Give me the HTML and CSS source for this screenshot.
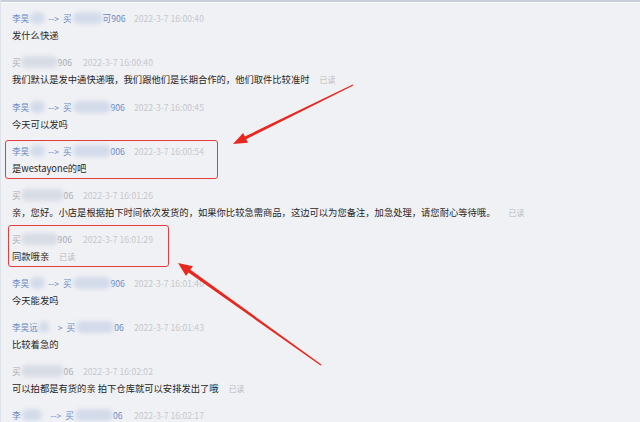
FILE: index.html
```html
<!DOCTYPE html>
<html lang="zh-CN">
<head>
<meta charset="utf-8">
<title>聊天记录</title>
<link rel="stylesheet" href="styles.css">
</head>
<body>
<div class="page">
  <div class="topbar"></div>
  <div class="list">
    <div class="msg">
      <div class="head buyer"><span>李昊</span><span class="blob bs"></span><span class="to">--&gt;</span><span class="seller-n">买</span><span class="blob bm"></span><span>可906</span><span class="time">2022-3-7 16:00:40</span></div>
      <div class="text">发什么快递</div>
    </div>
    <div class="msg">
      <div class="head seller"><span>买</span><span class="blob sb1"></span><span>906</span><span class="time">2022-3-7 16:00:40</span></div>
      <div class="text">我们默认是发中通快递哦，我们跟他们是长期合作的，他们取件比较准时<span class="read">已读</span></div>
    </div>
    <div class="msg">
      <div class="head buyer"><span>李昊</span><span class="blob bs"></span><span class="to">--&gt;</span><span class="seller-n">买</span><span class="blob bl"></span><span>906</span><span class="time">2022-3-7 16:00:45</span></div>
      <div class="text">今天可以发吗</div>
    </div>
    <div class="msg">
      <div class="head buyer"><span>李昊</span><span class="blob bs"></span><span class="to">--&gt;</span><span class="seller-n">买</span><span class="blob bl"></span><span>006</span><span class="time">2022-3-7 16:00:54</span></div>
      <div class="text">是westayone的吧</div>
    </div>
    <div class="msg">
      <div class="head seller"><span>买</span><span class="blob sb2"></span><span>06</span><span class="time">2022-3-7 16:01:26</span></div>
      <div class="text">亲，您好。小店是根据拍下时间依次发货的，如果你比较急需商品，这边可以为您备注，加急处理，请您耐心等待哦。<span class="read wide">已读</span></div>
    </div>
    <div class="msg">
      <div class="head seller"><span>买</span><span class="blob sb1"></span><span>906</span><span class="time">2022-3-7 16:01:29</span></div>
      <div class="text">同款哦亲<span class="read">已读</span></div>
    </div>
    <div class="msg">
      <div class="head buyer"><span>李昊</span><span class="blob bs"></span><span class="to">--&gt;</span><span class="seller-n">买</span><span class="blob bl"></span><span>906</span><span class="time">2022-3-7 16:01:40</span></div>
      <div class="text">今天能发吗</div>
    </div>
    <div class="msg">
      <div class="head buyer"><span>李昊远</span><span class="blob bt"></span><span class="to">&gt;</span><span class="seller-n">买</span><span class="blob bl"></span><span>06</span><span class="time">2022-3-7 16:01:43</span></div>
      <div class="text">比较着急的</div>
    </div>
    <div class="msg">
      <div class="head seller"><span>买</span><span class="blob sb2"></span><span>06</span><span class="time">2022-3-7 16:02:02</span></div>
      <div class="text">可以拍都是有货的亲 拍下仓库就可以安排发出了哦<span class="read">已读</span></div>
    </div>
    <div class="msg">
      <div class="head buyer"><span>李</span><span class="blob bw"></span><span class="to">--&gt;</span><span class="seller-n">买</span><span class="blob bl"></span><span>06</span><span class="time">2022-3-7 16:02:17</span></div>
      <div class="text">&nbsp;</div>
    </div>
  </div>

  <div class="mark mark-a"></div>
  <div class="mark mark-b"></div>
  <svg class="arrows" width="640" height="422" viewBox="0 0 640 422" xmlns="http://www.w3.org/2000/svg">
    <polygon fill="#e8271f" points="351.7,84.4 243.9,136.5 242.1,132.9 232,144 247.0,142.7 245.2,139.2 352.3,85.6"/>
    <polygon fill="#e8271f" points="320.4,364.4 189.4,269.7 191.9,266.2 177,263 185.0,276.0 187.4,272.5 319.6,365.6"/>
  </svg>
</div>
</body>
</html>
```

FILE: styles.css
```css
html, body {
  margin: 0;
  padding: 0;
  background: #f0f1f5;
}

body {
  font-family: "Noto Sans CJK SC", "Noto Sans", sans-serif;
  color: #333;
  overflow: hidden;
}

.page {
  position: relative;
  width: 640px;
  height: 422px;
  overflow: hidden;
  background: #f0f1f5;
  border-left: 1px solid #dfe3ea;
  box-sizing: border-box;
}

.topbar {
  height: 1px;
  border-top: 2px solid #c8cfdb;
  background: #f9fafc;
}

.list {
  padding-top: 1.8px;
}

.msg {
  position: relative;
  padding: 7.55px 0 7.55px 11px;
}

.head {
  display: flex;
  align-items: center;
  height: 12px;
  line-height: 12px;
  font-size: 8.6px;
  white-space: nowrap;
}

.buyer {
  color: #6a88c9;
}

.seller {
  color: #a9acb2;
}

.to {
  margin-left: 3px;
  margin-right: 4px;
}

.blob {
  display: inline-block;
  height: 12px;
  border-radius: 6px;
  background: #d3dbea;
  filter: blur(2px);
}

.seller .blob {
  background: #d8dce5;
}

.bs { width: 15px; margin-left: 1px; }
.bt { width: 10px; margin-left: 1px; margin-right: 6px; }
.bw { width: 20px; margin-left: 1px; margin-right: 6px; }
.bm { width: 30px; margin-left: 1px; }
.bl { width: 38px; margin-left: 1px; }
.sb1 { width: 37px; }
.sb2 { width: 43px; }

.time {
  color: #c6c8cc;
}

.buyer .time {
  position: absolute;
  left: 133px;
}

.seller .time {
  position: absolute;
  left: 82px;
}

.text {
  margin-top: 5px;
  height: 12px;
  line-height: 12px;
  font-size: 9.3px;
  color: #262626;
  white-space: nowrap;
}

.read {
  margin-left: 10px;
  font-size: 8px;
  color: #b9bbbf;
}

.read.wide {
  margin-left: 13px;
}

.mark {
  position: absolute;
  border: 1.5px solid #e43d3d;
  border-radius: 3px;
  box-sizing: border-box;
}

.mark-a {
  left: 4px;
  top: 140px;
  width: 213px;
  height: 39px;
}

.mark-b {
  left: 7px;
  top: 225px;
  width: 161px;
  height: 42px;
}

.arrows {
  position: absolute;
  left: 0;
  top: 0;
}
```
